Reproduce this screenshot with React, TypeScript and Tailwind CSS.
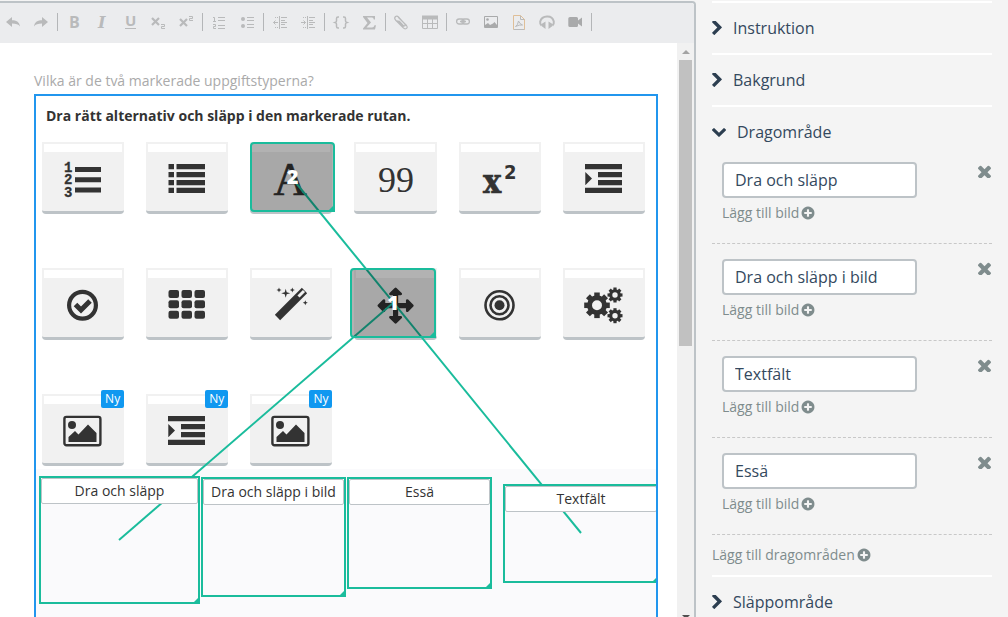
import { useState, type ReactNode } from "react";

const FA_CHEVRON_RIGHT =
  "M1363 877l-742 742q-19 19-45 19t-45-19l-166-166q-19-19-19-45t19-45l531-531-531-531q-19-19-19-45t19-45l166-166q19-19 45-19t45 19l742 742q19 19 19 45t-19 45z";
const FA_CHEVRON_DOWN =
  "M1683 808l-742 741q-19 19-45 19t-45-19l-742-741q-19-19-19-45.5t19-45.5l166-165q19-19 45-19t45 19l531 531 531-531q19-19 45-19t45 19l166 165q19 19 19 45.5t-19 45.5z";
const FA_TIMES =
  "M1490 1322q0 40-28 68l-136 136q-28 28-68 28t-68-28l-294-294-294 294q-28 28-68 28t-68-28l-136-136q-28-28-28-68t28-68l294-294-294-294q-28-28-28-68t28-68l136-136q28-28 68-28t68 28l294 294 294-294q28-28 68-28t68 28l136 136q28 28 28 68t-28 68l-294 294 294 294q28 28 28 68z";
const FA_PLUS_CIRCLE =
  "M1344 960v-128q0-26-19-45t-45-19h-256v-256q0-26-19-45t-45-19h-128q-26 0-45 19t-19 45v256h-256q-26 0-45 19t-19 45v128q0 26 19 45t45 19h256v256q0 26 19 45t45 19h128q26 0 45-19t19-45v-256h256q26 0 45-19t19-45zm320-64q0 209-103 385.5t-279.5 279.5-385.5 103-385.5-103-279.5-279.5-103-385.5 103-385.5 279.5-279.5 385.5-103 385.5 103 279.5 279.5 103 385.5z";
const FA_ARROWS =
  "M1792 896q0 26-19 45l-256 256q-19 19-45 19t-45-19-19-45v-128h-384v384h128q26 0 45 19t19 45-19 45l-256 256q-19 19-45 19t-45-19l-256-256q-19-19-19-45t19-45 45-19h128v-384h-384v128q0 26-19 45t-45 19-45-19l-256-256q-19-19-19-45t19-45l256-256q19-19 45-19t45 19 19 45v128h384v-384h-128q-26 0-45-19t-19-45 19-45l256-256q19-19 45-19t45 19l256 256q19 19 19 45t-19 45-45 19h-128v384h384v-128q0-26 19-45t45-19 45 19l256 256q19 19 19 45z";

type Tool = { label: string; icon: ReactNode };

const toolGroups: Tool[][] = [
  [
    { label: "Ångra", icon: <path d="M1 8l6-5v3.2c4 0 7.500 1.500 8 6.300-1.500-2-4-2.900-8-2.900V13z" fill="currentColor" /> },
    { label: "Gör om", icon: <path d="M15 8L9 3v3.200C5 6.200 1.500 7.700 1 12.500c1.500-2 4-2.900 8-2.900V13z" fill="currentColor" /> },
  ],
  [
    { label: "Fet", icon: <text x="3" y="14" fontSize="16" fontWeight="700" fill="currentColor">B</text> },
    { label: "Kursiv", icon: <text x="4" y="14" fontSize="16" fontWeight="700" fontStyle="italic" fontFamily="DejaVu Serif" fill="currentColor">I</text> },
    {
      label: "Understruken",
      icon: (
        <>
          <text x="3" y="12" fontSize="15" fontWeight="700" fill="currentColor">U</text>
          <path d="M3 14.500h11" stroke="currentColor" />
        </>
      ),
    },
    {
      label: "Nedsänkt",
      icon: (
        <>
          <path d="M2 4l7 7M9 4l-7 7" stroke="currentColor" strokeWidth="2.200" />
          <path d="M11 10.500h3.500v2H11.500v2H15" fill="none" stroke="currentColor" />
        </>
      ),
    },
    {
      label: "Upphöjd",
      icon: (
        <>
          <path d="M2 5l7 7M9 5l-7 7" stroke="currentColor" strokeWidth="2.200" />
          <path d="M11 2.500h3.500v2H11.500v2H15" fill="none" stroke="currentColor" />
        </>
      ),
    },
  ],
  [
    {
      label: "Numrerad lista",
      icon: <path d="M2 3.500h1.500v4M2 7.500h3M2 10.500h2.500v2H2.500v2H5M7 3.500h7M7 6.500h7M7 11.500h7M7 14.500h7" fill="none" stroke="currentColor" />,
    },
    {
      label: "Punktlista",
      icon: (
        <>
          <circle cx="4" cy="5" r="2" fill="currentColor" />
          <circle cx="4" cy="12" r="2" fill="currentColor" />
          <path d="M8 3.500h7M8 6.500h7M8 10.500h7M8 13.500h7" stroke="currentColor" />
        </>
      ),
    },
  ],
  [
    {
      label: "Minska indrag",
      icon: (
        <>
          <path d="M1.500 8.500H6M3.500 6.500l-2 2 2 2M7.500 2v13M9 3.500h6M9 6.500h4M9 8.500h6M9 10.500h4M9 13.500h6" fill="none" stroke="currentColor" />
          <path d="M3 3.500h4M3 13.500h4" stroke="currentColor" strokeDasharray="1 1" />
        </>
      ),
    },
    {
      label: "Öka indrag",
      icon: (
        <>
          <path d="M1 8.500h4.500M3.500 6.500l2 2-2 2M7.500 2v13M9 3.500h6M9 6.500h4M9 8.500h6M9 10.500h4M9 13.500h6" fill="none" stroke="currentColor" />
          <path d="M3 3.500h4M3 13.500h4" stroke="currentColor" strokeDasharray="1 1" />
        </>
      ),
    },
  ],
  [
    {
      label: "Kod",
      icon: <path d="M6 3H5Q3.500 3 3.500 4.500V7Q3.500 8 2 8.500 3.500 9 3.500 10v2.500Q3.500 14 5 14h1M10 3h1q1.500 0 1.500 1.500V7q0 1 1.500 1.500-1.500.5-1.500 1.500v2.500Q12.500 14 11 14h-1" fill="none" stroke="currentColor" strokeWidth="1.500" />,
    },
    {
      label: "Formel",
      icon: <path d="M2 2h12v3.500h-1.200Q12.500 3.500 11 3.500H6l4 5-4.500 5H11q2 0 2.500-2.200H15L14 15.500H2V14.500l4.500-5.500L2 3z" fill="currentColor" />,
    },
  ],
  [
    {
      label: "Bifoga fil",
      icon: <path d="M3.500 6.500l6 6.500M4 3l8.500 8.500q1.500 2-.2 3-1.600.8-3-.6L1.500 6q-1.600-2 0-3.500 1.600-1 3.200.6l6 6.700q1 1.300.2 2-.8.500-1.700-.5L5 7" fill="none" stroke="currentColor" strokeWidth="1.200" />,
    },
    {
      label: "Tabell",
      icon: (
        <>
          <path d="M0 1.500h16v4H0z" fill="currentColor" />
          <path d="M.5 2v12.500h15V2M.5 9.500h15M5.500 5v9.500M10.500 5v9.500" fill="none" stroke="currentColor" />
        </>
      ),
    },
  ],
  [
    {
      label: "Länk",
      icon: (
        <g fill="none" stroke="currentColor" strokeWidth="1.300">
          <rect x="1.600" y="5" width="7.500" height="5" rx="2.500" />
          <rect x="6.900" y="5" width="7.500" height="5" rx="2.500" />
          <path d="M5 7.500h6" />
        </g>
      ),
    },
    {
      label: "Bild",
      icon: (
        <g className="text-[#a9aaab]">
          <path d="M1.500 2.500v11h13v-11z" fill="none" stroke="currentColor" />
          <circle cx="4.500" cy="5.500" r="1.300" fill="currentColor" />
          <path d="M2 13v-2l3-2 2 2 3-1.500 1.500-1.500 2.500 3v2z" fill="currentColor" />
        </g>
      ),
    },
    {
      label: "PDF",
      icon: (
        <>
          <path d="M9.500 1.500v4h4V15.500h-11" fill="none" stroke="currentColor" />
          <path d="M2.500 15.500v-14h7l4 4v10" fill="none" stroke="#dfbf98" />
          <path d="M4.500 12.500q2.500-1.500 3-5.500 1 3 4 4-3-.5-7 1.500z" fill="none" stroke="currentColor" />
        </>
      ),
    },
    {
      label: "Ljud",
      icon: (
        <>
          <path d="M2.500 11.500Q.8 10 1.200 7.500 2.500 2.800 8 2.500t6.800 5q.4 2.500-1.300 4" fill="none" stroke="currentColor" strokeWidth="2" />
          <path d="M6.500 7.500v7.500l-4-3v-2zM9.500 7.500v7.500l4-3v-2z" fill="currentColor" />
        </>
      ),
    },
    {
      label: "Video",
      icon: <path d="M3 3h6.500q1.500 0 1.500 1.500v2l4-3v9l-4-3v2q0 1.500-1.500 1.500H3Q1.300 13 1.300 11.500v-7Q1.300 3 3 3z" fill="currentColor" className="text-[#a9aaab]" />,
    },
  ],
];

function Gear({ cx, cy, r, tooth, hole }: { cx: number; cy: number; r: number; tooth: number; hole: number }) {
  return (
    <g transform={`translate(${cx} ${cy})`}>
      <circle r={(r * 0.78 + hole) / 2} fill="none" stroke="currentColor" strokeWidth={r * 0.78 - hole} />
      {[0, 45, 90, 135, 180, 225, 270, 315].map((a) => (
        <rect key={a} x={-tooth / 2} y={-r} width={tooth} height={r * 0.35} fill="currentColor" transform={`rotate(${a})`} />
      ))}
    </g>
  );
}

const indentIcon = (
  <path d="M1 5h37v5.300H1zM14 13h24v5.200H14zM14 21h24v5.200H14zM1 28.700h37V34H1zM1.300 13v13.200L8 19.600z" fill="currentColor" />
);

const imageIcon = (
  <>
    <rect x="1.400" y="5.900" width="36" height="28.400" rx="2" fill="none" stroke="currentColor" strokeWidth="2.400" />
    <circle cx="9" cy="14" r="4" fill="currentColor" />
    <path d="M5.500 31v-5L12 20l3.500 3.500 9.500-10 8.500 8.500v9z" fill="currentColor" />
  </>
);

const tiles: { name: string; isNew?: boolean; icon: ReactNode }[] = [
  {
    name: "ordered",
    icon: (
      <>
        <path d="M12 8h26v5H12zM12 18.200h26v5H12zM12 28.500h26v5H12z" fill="currentColor" />
        <g fontFamily="Liberation Mono" fontSize="14" fontWeight="700" stroke="currentColor" strokeWidth="0.3" fill="currentColor">
          <text x="1" y="13">1</text>
          <text x="1" y="25">2</text>
          <text x="1" y="38">3</text>
        </g>
      </>
    ),
  },
  {
    name: "bullets",
    icon: (
      <path
        d="M1.500 5h5.500v5.200H1.500zM1.500 13h5.500v5.200H1.500zM1.500 21h5.500v5.200H1.500zM1.500 28.800h5.500V34H1.500zM9.500 5H38v5.200H9.500zM9.500 13H38v5.200H9.500zM9.500 21H38v5.200H9.500zM9.500 28.800H38V34H9.500z"
        fill="currentColor"
      />
    ),
  },
  { name: "font", icon: <text x="19" y="36" textAnchor="middle" fontFamily="Liberation Serif" fontSize="46" stroke="currentColor" strokeWidth="0.6" fill="currentColor">A</text> },
  { name: "quote", icon: <text x="20" y="33" textAnchor="middle" fontFamily="Liberation Serif" fontSize="36" fill="currentColor">99</text> },
  {
    name: "power",
    icon: (
      <>
        <text x="3" y="34" fontFamily="DejaVu Serif Condensed, DejaVu Serif" fontSize="34" fontWeight="700" stroke="currentColor" strokeWidth="0.6" fill="currentColor">x</text>
        <text x="24" y="20" fontFamily="DejaVu Sans Condensed, DejaVu Sans" fontSize="20" fontWeight="700" fill="currentColor">2</text>
      </>
    ),
  },
  { name: "indent", icon: indentIcon },
  {
    name: "check",
    icon: (
      <g fill="none" stroke="currentColor">
        <circle cx="19.500" cy="20.300" r="13.400" strokeWidth="4.200" />
        <path d="M12.500 19.500l5.500 5.500 9-9" strokeWidth="5" />
      </g>
    ),
  },
  {
    name: "grid",
    icon: (
      <g fill="currentColor">
        {[5, 15.3, 25.7].map((y) =>
          [1.5, 14.5, 27.5].map((x) => <rect key={`${x}-${y}`} x={x} y={y} width="10.500" height="8" rx="2" />),
        )}
      </g>
    ),
  },
  {
    name: "wand",
    icon: (
      <>
        <path d="M6.500 32.500l27-27" stroke="currentColor" strokeWidth="7.500" />
        <path d="M27.500 11.500l5.500-5.500" stroke="#f1f1f1" strokeWidth="3" />
        <path d="M14.700 3.800l1 3.500 3.500 1-3.500 1-1 3.500-1-3.500-3.500-1 3.500-1zM8 2.500l.7 1.800 1.800.7-1.800.7L8 7.500l-.7-1.800L5.500 5l1.800-.7zM21.300 2.500l.7 1.800 1.800.7-1.800.7-.7 1.800-.7-1.800-1.800-.7 1.800-.7zM34.300 15.200l.7 1.800 1.800.7-1.800.7-.7 1.800-.7-1.800-1.800-.7 1.800-.7z" fill="currentColor" />
      </>
    ),
  },
  { name: "drag", icon: <path d={FA_ARROWS} fill="currentColor" transform="translate(1.500 2.500) scale(.0202)" /> },
  {
    name: "target",
    icon: (
      <g fill="none" stroke="currentColor" strokeWidth="2.600">
        <circle cx="19.500" cy="20.300" r="14" />
        <circle cx="19.500" cy="20.300" r="9" />
        <circle cx="19.500" cy="20.300" r="5" fill="currentColor" stroke="none" />
      </g>
    ),
  },
  {
    name: "gears",
    icon: (
      <>
        <Gear cx={13} cy={20.3} r={12.8} tooth={5.500} hole={5} />
        <Gear cx={31} cy={10} r={7.500} tooth={3.200} hole={2.700} />
        <Gear cx={31} cy={30.700} r={7.500} tooth={3.200} hole={2.700} />
      </>
    ),
  },
  { name: "image", isNew: true, icon: imageIcon },
  { name: "indent-new", isNew: true, icon: indentIcon },
  { name: "image-drop", isNew: true, icon: imageIcon },
];

function Toolbar() {
  return (
    <div className="flex h-10 shrink-0 items-center overflow-hidden bg-[#ebecee] pb-[2px]">
      <div className="-ml-px flex items-center">
        {toolGroups.map((group, i) => (
          <div key={i} className="flex items-center">
            {group.map((tool) => (
              <button key={tool.label} type="button" aria-label={tool.label} className="flex h-7 w-7 items-center justify-center text-[#b9babb]">
                <svg viewBox="0 0 16 16" className="h-4 w-4 overflow-visible">{tool.icon}</svg>
              </button>
            ))}
            <span className="mx-[2px] h-[18px] w-px bg-[#b4b6b8]" />
          </div>
        ))}
      </div>
    </div>
  );
}

function Tile({ icon, isNew }: { icon: ReactNode; isNew?: boolean }) {
  return (
    <div className="relative flex h-[72px] flex-col rounded-b-[4px] border-b-[3px] border-[#bdc3c7] bg-[#f1f1f1] px-[2px] pt-[2px]">
      <div className="h-2 bg-white" />
      <div className="flex flex-1 items-center justify-center pb-[5px]">
        <svg viewBox="0 0 40 40" className="h-10 w-10 shrink-0 overflow-visible text-[#333]">{icon}</svg>
      </div>
      {isNew && (
        <span className="absolute -top-1 right-0 rounded-[2px] bg-[#1098f0] px-1 text-xs leading-[18px] text-white">Ny</span>
      )}
    </div>
  );
}

function Corner() {
  return (
    <svg viewBox="0 0 6 6" className="absolute -right-px -bottom-px h-[6px] w-[6px]">
      <path d="M6 0v6H0z" fill="#1abc9c" />
    </svg>
  );
}

const dropZones = [
  { label: "Dra och släpp", pos: "left-[3px] top-[380px] h-[128px] w-[161px]" },
  { label: "Dra och släpp i bild", pos: "left-[165px] top-[381px] h-[120px] w-[145px]" },
  { label: "Essä", pos: "left-[311px] top-[381px] h-[112px] w-[145px]" },
  { label: "Textfält", pos: "left-[467px] top-[388px] h-[99px] w-[156px]" },
];

const dragZones = [
  { id: "2", pos: "left-[214px] top-[46px] h-[70px] w-[85px]" },
  { id: "1", pos: "left-[314px] top-[172px] h-[70px] w-[86px]" },
];

function Canvas() {
  return (
    <div className="relative flex min-h-[640px] flex-col overflow-hidden border-2 border-[#2196ee]">
      <p className="px-[10px] pt-[10px] text-sm leading-5 font-bold text-[#333]">Dra rätt alternativ och släpp i den markerade rutan.</p>
      <div className="mt-4 mr-[11px] ml-[6px] grid grid-cols-6 gap-x-[22px] gap-y-[54px]">
        {tiles.map((t) => (
          <Tile key={t.name} icon={t.icon} isNew={t.isNew} />
        ))}
      </div>
      <div className="mt-[3px] flex-1 bg-[#fafafc]" />

      {/* connections between drag and drop zones */}
      <svg className="absolute top-0 left-0 h-full w-full" fill="none" stroke="#1abc9c" strokeWidth="2">
        <path d="M256 82L545 437" />
        <path d="M357 207L83 444" />
      </svg>

      {dragZones.map((z) => (
        <div key={z.id} className={`absolute flex items-center justify-center rounded-[4px] rounded-br-none border-2 border-[#1abc9c] bg-black/30 text-xl font-extrabold text-white ${z.pos}`}>
          {z.id}
          <Corner />
        </div>
      ))}
      {dropZones.map((z) => (
        <div key={z.label} className={`absolute border-2 border-[#1abc9c] ${z.pos}`}>
          <div className="rounded-[2px] border border-[#bdc3c7] bg-white text-center text-sm leading-6 text-[#333]">{z.label}</div>
          <Corner />
        </div>
      ))}
    </div>
  );
}

function Scrollbar() {
  return (
    <div className="flex w-[17px] shrink-0 flex-col items-center bg-[#f1f1f1]">
      <div className="flex h-[17px] items-center">
        <svg viewBox="0 0 8 4" className="h-1 w-2"><path d="M4 0l4 4H0z" fill="#a3a3a3" /></svg>
      </div>
      <div className="h-[286px] w-[13px] bg-[#c1c1c1]" />
      <div className="flex-1" />
      <svg viewBox="0 0 8 4" className="-mb-[2px] h-1 w-2"><path d="M0 0h8L4 4z" fill="#505050" /></svg>
    </div>
  );
}

function AddLink({ children }: { children: ReactNode }) {
  return (
    <a href="#" className="inline-flex items-center gap-[2px] text-sm leading-5 text-[#7f8c8d]">
      {children}
      <svg viewBox="64 64 1664 1664" className="h-[14px] w-[14px]"><path d={FA_PLUS_CIRCLE} fill="currentColor" /></svg>
    </a>
  );
}

function Section({ title, open, onToggle, children }: { title: string; open: boolean; onToggle: () => void; children?: ReactNode }) {
  return (
    <section className="border-t-2 border-white">
      <button
        type="button"
        aria-expanded={open}
        onClick={onToggle}
        className={`flex w-full items-center gap-[11px] text-base text-[#34495e] ${open ? "h-10 pt-[10px]" : "h-[50px]"}`}
      >
        {open ? (
          <svg viewBox="90 533 1612 1036" className="h-[9px] w-[14px]"><path d={FA_CHEVRON_DOWN} fill="#2c3e50" /></svg>
        ) : (
          <svg viewBox="346 154 1036 1484" className="h-[14px] w-[10px]"><path d={FA_CHEVRON_RIGHT} fill="#2c3e50" /></svg>
        )}
        {title}
      </button>
      {open && children}
    </section>
  );
}

export default function App() {
  const [open, setOpen] = useState("Dragområde");
  const [items, setItems] = useState(["Dra och släpp", "Dra och släpp i bild", "Textfält", "Essä"]);
  const toggle = (title: string) => setOpen(open === title ? "" : title);

  return (
    <div className="flex h-screen overflow-hidden bg-[#f4f4f4] pt-px font-['Open_Sans',sans-serif]">
      <main className="flex min-w-0 flex-1 flex-col overflow-hidden rounded-tr-[4px] border-t-2 border-r-2 border-[#bdc3c7] bg-white">
        <Toolbar />
        <div className="flex min-h-0 flex-1">
          <div className="min-w-0 flex-1 overflow-hidden pt-7 pr-[19px] pl-[34px]">
            <p className="mb-[3px] text-sm leading-5 text-[#aaa]">Vilka är de två markerade uppgiftstyperna?</p>
            <Canvas />
          </div>
          <Scrollbar />
        </div>
      </main>

      <aside className="w-[312px] shrink-0 px-4">
        <Section title="Instruktion" open={open === "Instruktion"} onToggle={() => toggle("Instruktion")} />
        <Section title="Bakgrund" open={open === "Bakgrund"} onToggle={() => toggle("Bakgrund")} />
        <Section title="Dragområde" open={open === "Dragområde"} onToggle={() => toggle("Dragområde")}>
          {items.map((item, i) => (
            <div key={i} className="border-b border-dashed border-[#c8c8c8] pt-[15px] pb-5 pl-[10px]">
              <div className="flex items-start justify-between pr-px">
                <input
                  type="text"
                  aria-label={`Dragområde ${i + 1}`}
                  value={item}
                  onChange={(e) => setItems(items.map((v, n) => (n === i ? e.target.value : v)))}
                  className="h-9 w-[195px] rounded-[4px] border-2 border-[#bdc3c7] bg-white px-[11px] text-base text-[#34495e]"
                />
                <button type="button" aria-label="Ta bort" onClick={() => setItems(items.filter((_, n) => n !== i))} className="pt-[3px] text-[#7f8c8d]">
                  <svg viewBox="302 302 1188 1188" className="h-[13px] w-[13px]"><path d={FA_TIMES} fill="currentColor" /></svg>
                </button>
              </div>
              <div className="mt-[5px] flex">
                <AddLink>Lägg till bild</AddLink>
              </div>
            </div>
          ))}
          <div className="flex h-10 items-center">
            <AddLink>Lägg till dragområden</AddLink>
          </div>
        </Section>
        <Section title="Släppområde" open={open === "Släppområde"} onToggle={() => toggle("Släppområde")} />
      </aside>
    </div>
  );
}
